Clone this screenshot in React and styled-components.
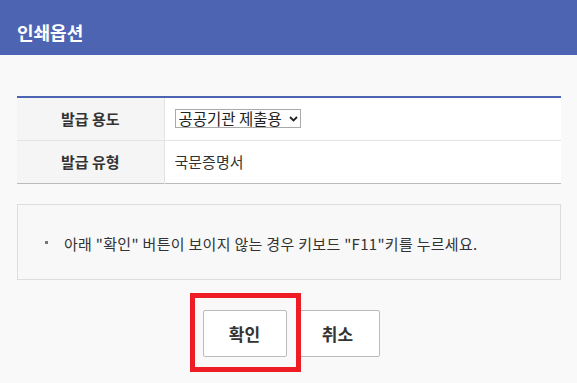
import React, { useState } from 'react'
import styled, { createGlobalStyle } from 'styled-components'

const GlobalStyle = createGlobalStyle`
  *, *::before, *::after { box-sizing: border-box; }
  body {
    margin: 0;
    background: #f9f9f9;
    font-family: 'Malgun Gothic', 'Noto Sans CJK KR', 'Noto Sans', sans-serif;
    color: #333;
  }
`

export default function App() {
  const [purpose, setPurpose] = useState('public')
  return (
    <Root>
      <GlobalStyle />
      <Header><h1>인쇄옵션</h1></Header>
      <Content>
        <OptionTable>
          <tbody>
            <tr>
              <th>발급 용도</th>
              <td>
                <SelectWrap>
                  <select value={purpose} onChange={e => setPurpose(e.target.value)}>
                    <option value='public'>공공기관 제출용</option>
                    <option value='personal'>개인 보관용</option>
                  </select>
                  <svg width='9' height='6' viewBox='0 0 9 6'>
                    <path d='M1 1l3.5 3.5L8 1' fill='none' stroke='#222' strokeWidth='1.8' />
                  </svg>
                </SelectWrap>
              </td>
            </tr>
            <tr>
              <th>발급 유형</th>
              <td>국문증명서</td>
            </tr>
          </tbody>
        </OptionTable>
        <Notice>
          <li>아래 "확인" 버튼이 보이지 않는 경우 키보드 "F11"키를 누르세요.</li>
        </Notice>
        <ButtonRow>
          <Button highlight>확인</Button>
          <Button>취소</Button>
        </ButtonRow>
      </Content>
    </Root>
  )
}

const Root = styled.div`
  width: 577px;
  min-height: 383px;
`

const Header = styled.div`
  height: 55px;
  background: #4d64b3;
  padding: 19px 17px 0;
  h1 {
    margin: 0;
    font-size: 18px;
    font-weight: 700;
    color: #fff;
    line-height: 26px;
  }
`

const Content = styled.div`
  padding: 41px 16px 0 17px;
`

const OptionTable = styled.table`
  width: 100%;
  border-collapse: collapse;
  border-top: 2px solid #4d64b3;
  border-bottom: 1px solid #bbb;
  background: #fff;
  font-size: 15px;
  th {
    width: 147px;
    background: #f5f5f5;
    border-right: 1px solid #e3e3e3;
    font-weight: 700;
    color: #333;
    text-align: center;
    padding: 0;
  }
  td {
    padding: 0 10px;
    color: #333;
  }
  tr:first-child th, tr:first-child td {
    height: 43px;
    border-bottom: 1px solid #e3e3e3;
  }
  tr:last-child th, tr:last-child td {
    height: 43px;
  }
`

const SelectWrap = styled.span`
  position: relative;
  display: inline-block;
  select {
    appearance: none;
    height: 19px;
    width: 126px;
    border: 1px solid #aaa;
    border-radius: 0;
    background: #fff;
    padding: 0 0 0 3px;
    font-family: inherit;
    font-size: 15.5px;
    color: #222;
    line-height: 17px;
    display: block;
  }
  svg {
    position: absolute;
    right: 3px;
    top: 7px;
    pointer-events: none;
  }
`

const Notice = styled.ul`
  margin: 20px 0 0;
  height: 76px;
  border: 1px solid #ddd;
  background: #f8f8f8;
  list-style: none;
  padding: 0 0 0 27px;
  display: flex;
  align-items: center;
  li {
    position: relative;
    padding-left: 19px;
    font-size: 15px;
    color: #333;
    padding-top: 3px;
    letter-spacing: 0.3px;
    &::before {
      content: '';
      position: absolute;
      left: 0;
      top: 11px;
      width: 3px;
      height: 3px;
      background: #777;
    }
  }
`

const ButtonRow = styled.div`
  display: flex;
  justify-content: center;
  gap: 9px;
  margin-top: 30px;
  padding-left: 4px;
`

const Button = styled.button`
  position: relative;
  width: 84px;
  height: 47px;
  background: #fff;
  border: 1px solid #bbb;
  border-radius: 2px;
  font-family: inherit;
  font-size: 17px;
  font-weight: 700;
  color: #333;
  cursor: pointer;
  &::after {
    content: '';
    display: ${p => (p.highlight ? 'block' : 'none')};
    position: absolute;
    left: -14px;
    top: -18px;
    width: 111px;
    height: 79px;
    border: 5px solid #ee1c25;
    z-index: 2;
  }
`
